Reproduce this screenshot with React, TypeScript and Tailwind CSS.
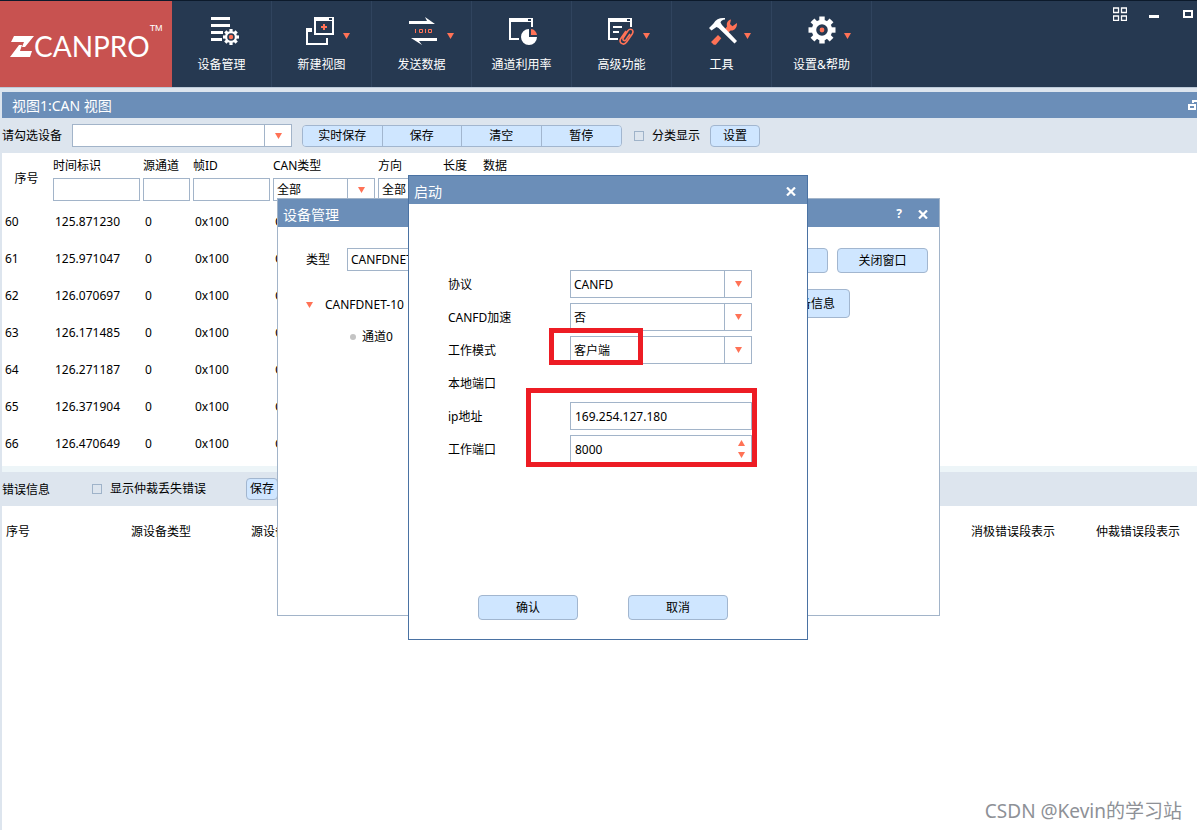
import type { ReactNode } from "react";

const fieldBorder = "border border-[#a2b4c9] bg-white";
const buttonLook = "border border-[#a2b6cf] bg-[#cfe6ff] text-center";

function Caret({ className = "" }: { className?: string }) {
  return (
    <svg viewBox="0 0 7 6" className={`h-1.5 w-[7px] ${className}`} aria-hidden="true">
      <path d="M0 0h7L3.5 6z" fill="#ff7256" />
    </svg>
  );
}

function Picker({ id, label, value, className }: { id: string; label?: string; value: string; className: string }) {
  return (
    <div className={`relative ${className}`}>
      <select
        id={id}
        aria-label={label}
        defaultValue={value}
        className={`block h-full w-full appearance-none rounded-none pl-[3px] pr-7 outline-none ${fieldBorder}`}
      >
        <option>{value}</option>
      </select>
      <span className="pointer-events-none absolute inset-y-px right-px flex w-[27px] items-center justify-center border-l border-[#a2b4c9] bg-white">
        <Caret />
      </span>
    </div>
  );
}

function Check({ id, text }: { id: string; text: string }) {
  return (
    <span className="flex items-center gap-2">
      <input id={id} type="checkbox" className="h-2.5 w-2.5 appearance-none border border-[#9fb3c9]" />
      <label htmlFor={id}>{text}</label>
    </span>
  );
}

function CloseMark() {
  return (
    <svg viewBox="0 0 10 9" className="h-[9px] w-2.5" aria-hidden="true">
      <path d="M1 .5l8 8M9 .5l-8 8" stroke="#fff" strokeWidth="2.2" />
    </svg>
  );
}

function Gear({ cx, cy, r, hole, dot }: { cx: number; cy: number; r: number; hole: number; dot: number }) {
  const body = r * 0.76;
  const ring = (body + hole) / 2;
  return (
    <g transform={`translate(${cx} ${cy})`}>
      <circle r={ring} fill="none" stroke="#fff" strokeWidth={body - hole} />
      {[0, 45, 90, 135, 180, 225, 270, 315].map((a) => (
        <rect key={a} x={-r * 0.2} y={-r} width={r * 0.4} height={r * 0.34} fill="#fff" transform={`rotate(${a})`} />
      ))}
      <circle r={dot} fill="#ff7256" />
    </g>
  );
}

const icons: { name: string; caret?: number; art: ReactNode }[] = [
  {
    name: "设备管理",
    art: (
      <>
        <path d="M39 1h19v3H39zM39 8h19v3H39zM39 15h12v3H39zM39 22h11v3H39z" fill="#fff" />
        <Gear cx={59} cy={21} r={8} hole={3.8} dot={2.2} />
      </>
    ),
  },
  {
    name: "新建视图",
    caret: 71,
    art: (
      <>
        <path d="M42 1h20v18H42zM44 5v12h16V5z" fill="#fff" fillRule="evenodd" />
        <path d="M57 2h3v2h-3z" fill="#263951" />
        <path d="M40 12v4h-4v11h18v-5h2v7H34V12z" fill="#fff" />
        <path d="M49 10h2V8h2v2h2v2h-2v2h-2v-2h-2z" fill="#ff7256" />
      </>
    ),
  },
  {
    name: "发送数据",
    caret: 75,
    art: (
      <>
        <path d="M37 5h18l-2-4 10 7H37zM65 25H47l3 4-11-7h26z" fill="#fff" />
        <path d="M43.5 13v4M53.5 13v4M47.5 13.5h3v3h-3zM56.5 13.5h3v3h-3z" stroke="#ff7256" strokeWidth="1" fill="none" />
      </>
    ),
  },
  {
    name: "通道利用率",
    art: (
      <>
        <path d="M37 2h24v9h-2V6H39v16h8v2H37z" fill="#fff" />
        <path d="M56 3h3v2h-3z" fill="#263951" />
        <path d="M57 13a8 8 0 1 0 8 8h-8z" fill="#fff" />
        <path d="M59 13a6.5 6.5 0 0 1 6 6h-6z" fill="#ff7256" />
      </>
    ),
  },
  {
    name: "高级功能",
    caret: 71,
    art: (
      <>
        <path d="M36 2h24v9h-2V6H38v16h8v2H36zM41 10h9v2h-9zM41 15h6v2h-6z" fill="#fff" />
        <path d="M55 3h3v2h-3z" fill="#263951" />
        <path
          d="M54 15l-5 7.200c-3.200 4.600 2.600 8 5.600 3.800l5.600-8c2.600-4-2-6.500-4.500-3L51.500 21.500c-1.800 2.700 1 4.200 2.700 1.900L58 18"
          fill="none"
          stroke="#ff7256"
          strokeWidth="1.6"
        />
      </>
    ),
  },
  {
    name: "工具",
    caret: 72,
    art: (
      <>
        <path d="M39 26l7-7 3.300 3.300-5.500 6.500h-2zM53 13l2-2.500c-.8-3.800 1-6.500 4-7l-1 4.500 2.400 2.200 4.600-3.200c.2 5-3 8-6.500 7.500L56.500 16.500z" fill="#ff7256" />
        <path d="M37 12l4.500-4.500C44 3 48 1.500 53 2v1.500c-2.500.2-4 1.200-4.500 3L50 9l15 16-2.500 2.500L46.500 12 44.500 11 39.500 14.500z" fill="#fff" />
      </>
    ),
  },
  { name: "设置&帮助", caret: 72, art: <Gear cx={50} cy={14} r={13.5} hole={5.8} dot={2.4} /> },
];

const frames = [
  ["60", "125.871230"],
  ["61", "125.971047"],
  ["62", "126.070697"],
  ["63", "126.171485"],
  ["64", "126.271187"],
  ["65", "126.371904"],
  ["66", "126.470649"],
];

function Header() {
  return (
    <header className="border-t border-[#0c1a2b] bg-[#263951] text-white">
      <div className="flex h-[86px]">
        <div className="flex w-[172px] shrink-0 items-center bg-[#c85250] pl-2.5">
          <svg viewBox="0 0 24 21" className="mt-1 h-[21px] w-6 shrink-0" aria-hidden="true">
            <path d="M4 0h20L15 11h-3l2-5H1zM9 9h3l-2 6h12l-2 6H0z" fill="#fff" />
          </svg>
          <span className="mt-1 font-['Lato',sans-serif] text-[28px] leading-8">CANPRO</span>
          <span className="mb-8 font-['Liberation_Sans',sans-serif] text-[9px] leading-3">TM</span>
        </div>
        <nav className="flex flex-1">
          {icons.map((item) => (
            <button key={item.name} type="button" className="flex w-[100px] flex-col border-r border-[#30445e] pt-[15px]">
              <svg viewBox="0 0 100 30" className="h-[30px] w-[100px] shrink-0" aria-hidden="true">
                {item.art}
                {item.caret && <path d={`M${item.caret} 17h7l-3.500 6z`} fill="#ff7256" />}
              </svg>
              <span className="mt-[11px] w-full text-center leading-4">{item.name}</span>
            </button>
          ))}
        </nav>
        <div className="flex items-start pr-1 pt-1.5">
          <button type="button" aria-label="布局">
            <svg viewBox="0 0 14 14" className="h-3.5 w-3.5" fill="none" stroke="#fff">
              <path d="M.5 1h5v4.500h-5zM8.500 1h5v4.500h-5zM.5 9h5v4.500h-5zM8.500 9h5v4.500h-5z" strokeWidth="1.300" />
            </svg>
          </button>
          <button type="button" aria-label="最小化" className="ml-[22px] mt-2">
            <svg viewBox="0 0 10 3" className="h-[3px] w-2.5"><path d="M0 0h10v3H0z" fill="#fff" /></svg>
          </button>
          <button type="button" aria-label="最大化" className="ml-6 mt-[3px]">
            <svg viewBox="0 0 10 8" className="h-2 w-2.5"><path d="M1 1h8v6H1z" fill="none" stroke="#fff" strokeWidth="2" /></svg>
          </button>
        </div>
      </div>
    </header>
  );
}

function Toolbar() {
  return (
    <div className="flex h-[35px] items-center">
      <label htmlFor="device" className="w-[70px] shrink-0">请勾选设备</label>
      <Picker id="device" value="" className="h-[23px] w-[220px]" />
      <div className="ml-2.5 grid w-80 grid-cols-4 divide-x divide-[#a2b6cf] overflow-hidden rounded border border-[#a2b6cf]">
        {["实时保存", "保存", "清空", "暂停"].map((t) => (
          <button key={t} type="button" className="h-5 bg-[#cfe6ff] leading-5">{t}</button>
        ))}
      </div>
      <div className="ml-3"><Check id="group" text="分类显示" /></div>
      <button type="button" className={`ml-2.5 h-[22px] w-[50px] rounded leading-5 ${buttonLook}`}>设置</button>
    </div>
  );
}

function FrameTable() {
  const filters = ["时间标识", "源通道", "帧ID"];
  const head = "pr-[3px] pt-[5px] pb-0.5 text-left align-top font-normal";
  return (
    <div className="bg-white pb-1">
      <table className="w-full table-fixed border-collapse">
        <colgroup>
          <col className="w-[51px]" />
          <col className="w-[90px]" />
          <col className="w-[50px]" />
          <col className="w-20" />
          <col className="w-[105px]" />
          <col className="w-[65px]" />
          <col className="w-10" />
          <col />
        </colgroup>
        <thead>
          <tr className="h-[50px] leading-4">
            <th className="pr-0.5 pt-0.5 font-normal">序号</th>
            {filters.map((f) => (
              <th key={f} className={head}>
                <label htmlFor={f} className="mb-1 block">{f}</label>
                <input id={f} className={`block h-[23px] w-full px-1 outline-none ${fieldBorder}`} />
              </th>
            ))}
            <th className={head}>
              <label htmlFor="kind" className="mb-1 block">CAN类型</label>
              <Picker id="kind" value="全部" className="h-[23px]" />
            </th>
            <th className={head}>
              <label htmlFor="dir" className="mb-1 block">方向</label>
              <Picker id="dir" value="全部" className="h-[23px]" />
            </th>
            <th className={head}>长度</th>
            <th className={head}>数据</th>
          </tr>
        </thead>
        <tbody>
          {frames.map(([n, time]) => (
            <tr key={n} className="h-[37px]">
              <td className="pl-[3px]">{n}</td>
              <td className="pl-0.5">{time}</td>
              <td className="pl-0.5">0</td>
              <td className="pl-0.5">0x100</td>
              <td className="pl-0.5">CAN</td>
              <td />
              <td />
              <td />
            </tr>
          ))}
        </tbody>
      </table>
    </div>
  );
}

function ErrorPanel() {
  return (
    <section className="flex flex-1 flex-col">
      <div className="flex h-[34px] items-center">
        <h2 className="w-[90px] pt-0.5">错误信息</h2>
        <Check id="arb" text="显示仲裁丢失错误" />
        <button type="button" className={`ml-10 h-[22px] w-8 rounded leading-5 ${buttonLook}`}>保存</button>
      </div>
      <div className="flex-1 bg-white pt-[17px]">
        <table className="w-full table-fixed border-collapse text-left">
          <colgroup>
            <col className="w-[125px]" />
            <col className="w-[120px]" />
            <col />
            <col className="w-[125px]" />
            <col className="w-[105px]" />
          </colgroup>
          <thead>
            <tr className="leading-[18px]">
              {["序号", "源设备类型", "源设备", "消极错误段表示", "仲裁错误段表示"].map((t) => (
                <th key={t} className="whitespace-nowrap pl-1 font-normal">{t}</th>
              ))}
            </tr>
          </thead>
        </table>
      </div>
    </section>
  );
}

function DeviceWindow() {
  return (
    <section className="absolute left-[277px] top-[198px] h-[418px] w-[663px] border border-[#a2b4c9] bg-white">
      <header className="flex h-7 items-center bg-[#6b8eb8] pl-[5px] pr-[11px] pt-0.5 text-white">
        <h2 className="flex-1 pt-0.5 text-sm leading-6">设备管理</h2>
        <button type="button" aria-label="帮助" className="mr-4 font-bold leading-4">?</button>
        <button type="button" aria-label="关闭设备管理"><CloseMark /></button>
      </header>
      <div className="flex items-start pl-7 pr-[11px] pt-[21px]">
        <label htmlFor="model" className="w-[41px] leading-6">类型</label>
        <Picker id="model" value="CANFDNET" className="h-[23px] w-[180px]" />
        <button type="button" className={`ml-auto h-[25px] w-[91px] rounded ${buttonLook}`} aria-label="打开" />
        <button type="button" className={`ml-[9px] h-[25px] w-[91px] rounded leading-[23px] ${buttonLook}`}>关闭窗口</button>
      </div>
      <div className="flex items-start justify-between pl-7 pr-[89px] pt-4">
        <ul>
          <li className="flex h-8 items-center gap-3"><Caret />CANFDNET-10</li>
          <li className="flex h-8 items-center gap-1.5 pl-11">
            <span className="h-1.5 w-1.5 rounded-full bg-[#c4c4c4]" />通道0
          </li>
        </ul>
        <button type="button" className={`h-[29px] w-[78px] rounded leading-[27px] ${buttonLook}`}>设备信息</button>
      </div>
    </section>
  );
}

function StartDialog() {
  const label = "flex h-7 items-center pt-0.5";
  const picker = "h-7 [&>select]:pt-0.5";
  return (
    <section role="dialog" aria-label="启动" className="absolute left-[408px] top-[175px] flex h-[465px] w-[400px] flex-col border border-[#4a72a3] bg-white">
      <header className="flex h-7 shrink-0 items-center bg-[#6b8eb8] pl-[5px] pr-[11px] pt-0.5 text-white">
        <h2 className="flex-1 pt-0.5 text-sm leading-6">启动</h2>
        <button type="button" aria-label="关闭启动"><CloseMark /></button>
      </header>
      <form className="mt-[66px] grid grid-cols-[122px_182px] gap-y-[5px] pl-[39px]">
        <label htmlFor="protocol" className={label}>协议</label>
        <Picker id="protocol" value="CANFD" className={picker} />
        <label htmlFor="boost" className={label}>CANFD加速</label>
        <Picker id="boost" value="否" className={picker} />
        <label htmlFor="mode" className={label}>工作模式</label>
        <Picker id="mode" value="客户端" className={picker} />
        <span className={`col-span-2 ${label}`}>本地端口</span>
        <label htmlFor="ip" className={label}>ip地址</label>
        <input id="ip" defaultValue="169.254.127.180" className={`h-7 w-full px-1 outline-none ${fieldBorder}`} />
        <label htmlFor="port" className={label}>工作端口</label>
        <div className={`flex h-7 items-center ${fieldBorder}`}>
          <input id="port" defaultValue="8000" className="w-0 flex-1 px-1 pt-0.5 outline-none" />
          <span className="mr-1.5 flex flex-col gap-1.5">
            <button type="button" aria-label="增加"><Caret className="block rotate-180" /></button>
            <button type="button" aria-label="减少"><Caret className="block" /></button>
          </span>
        </div>
      </form>
      <div className="mb-[19px] mt-auto flex justify-center gap-[50px] pr-2.5">
        <button type="button" className={`h-[25px] w-[100px] rounded leading-[23px] ${buttonLook}`}>确认</button>
        <button type="button" className={`h-[25px] w-[100px] rounded leading-[23px] ${buttonLook}`}>取消</button>
      </div>
      <div className="pointer-events-none absolute left-[140px] top-[152px] h-[37px] w-[94px] border-[5px] border-[#ed1c24]" />
      <div className="pointer-events-none absolute left-[117px] top-[212px] h-[79px] w-[231px] border-[5px] border-[#ed1c24]" />
    </section>
  );
}

export default function App() {
  return (
    <div className="relative flex min-h-screen flex-col overflow-hidden bg-[#dde5ee] font-['Noto_Sans','Noto_Sans_CJK_SC',sans-serif] text-xs leading-4 text-black">
      <Header />
      <main className="flex flex-1 flex-col border-t border-[#bccad9] pl-0.5 pt-1">
        <div className="flex h-[26px] items-center justify-between bg-[#6b8eb8] pl-2.5 text-white">
          <h1 className="pt-0.5 text-sm leading-6">视图1:CAN 视图</h1>
          <button type="button" aria-label="还原" className="overflow-hidden">
            <svg viewBox="0 0 9 12" className="h-3 w-[9px]" fill="none" stroke="#fff" strokeWidth="2">
              <path d="M1 6h6v4H1zM5 4V2h4" />
            </svg>
          </button>
        </div>
        <Toolbar />
        <FrameTable />
        <div className="h-1.5 bg-[#edf5f8]" />
        <ErrorPanel />
      </main>
      <DeviceWindow />
      <StartDialog />
      <p className="pointer-events-none absolute bottom-[7px] right-[15px] text-[19px] leading-6 text-[#8e9197]">CSDN @Kevin的学习站</p>
    </div>
  );
}
